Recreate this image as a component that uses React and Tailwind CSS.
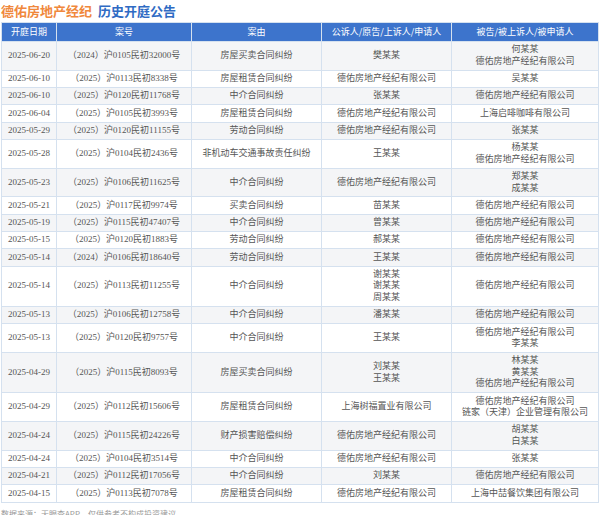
const rows = [
  ["2025-06-20","（2024）沪0105民初32000号","房屋买卖合同纠纷",["樊某某"],["何某某","德佑房地产经纪有限公司"]],
  ["2025-06-10","（2025）沪0113民初8338号","房屋租赁合同纠纷",["德佑房地产经纪有限公司"],["吴某某"]],
  ["2025-06-10","（2025）沪0120民初11768号","中介合同纠纷",["张某某"],["德佑房地产经纪有限公司"]],
  ["2025-06-04","（2025）沪0105民初3993号","房屋租赁合同纠纷",["德佑房地产经纪有限公司"],["上海启啡咖啡有限公司"]],
  ["2025-05-29","（2025）沪0120民初11155号","劳动合同纠纷",["德佑房地产经纪有限公司"],["张某某"]],
  ["2025-05-28","（2025）沪0104民初2436号","非机动车交通事故责任纠纷",["王某某"],["杨某某","德佑房地产经纪有限公司"]],
  ["2025-05-23","（2025）沪0106民初11625号","中介合同纠纷",["德佑房地产经纪有限公司"],["郑某某","成某某"]],
  ["2025-05-21","（2025）沪0117民初9974号","买卖合同纠纷",["苗某某"],["德佑房地产经纪有限公司"]],
  ["2025-05-19","（2025）沪0115民初47407号","中介合同纠纷",["曾某某"],["德佑房地产经纪有限公司"]],
  ["2025-05-15","（2025）沪0120民初1883号","劳动合同纠纷",["郝某某"],["德佑房地产经纪有限公司"]],
  ["2025-05-14","（2024）沪0106民初18640号","劳动合同纠纷",["王某某"],["德佑房地产经纪有限公司"]],
  ["2025-05-14","（2025）沪0113民初11255号","中介合同纠纷",["谢某某","谢某某","周某某"],["德佑房地产经纪有限公司"]],
  ["2025-05-13","（2025）沪0106民初12758号","中介合同纠纷",["潘某某"],["德佑房地产经纪有限公司"]],
  ["2025-05-13","（2025）沪0120民初9757号","中介合同纠纷",["王某某"],["德佑房地产经纪有限公司","李某某"]],
  ["2025-04-29","（2025）沪0115民初8093号","房屋买卖合同纠纷",["刘某某","王某某"],["林某某","黄某某","德佑房地产经纪有限公司"]],
  ["2025-04-29","（2025）沪0112民初15606号","房屋租赁合同纠纷",["上海树福置业有限公司"],["德佑房地产经纪有限公司","链家（天津）企业管理有限公司"]],
  ["2025-04-24","（2025）沪0115民初24226号","财产损害赔偿纠纷",["德佑房地产经纪有限公司"],["胡某某","白某某"]],
  ["2025-04-24","（2025）沪0104民初3514号","中介合同纠纷",["德佑房地产经纪有限公司"],["张某某"]],
  ["2025-04-21","（2025）沪0112民初17056号","中介合同纠纷",["刘某某"],["德佑房地产经纪有限公司"]],
  ["2025-04-15","（2025）沪0113民初7078号","房屋租赁合同纠纷",["德佑房地产经纪有限公司"],["上海中喆餐饮集团有限公司"]],
];

export default function App() {
  const cell = "border border-[#d5e1ef] px-1 py-[2.4px] text-center align-middle";
  return (
    <div className="w-[600px] h-[515px] bg-white overflow-hidden text-[#555]" style={{fontFamily:'"Liberation Serif","Noto Sans CJK SC",serif'}}>
      <div className="h-[22px] flex items-center gap-[6px] pl-[1px] text-[13px] font-bold" style={{fontFamily:'"Noto Sans CJK SC",sans-serif'}}>
        <span className="text-[#f0883c]">德佑房地产经纪</span>
        <span className="text-[#2f6bc4]">历史开庭公告</span>
      </div>
      <table className="w-[598px] ml-[1px] border-collapse text-[9px] leading-[11.5px]">
        <colgroup>
          <col className="w-[55px]"/><col className="w-[135px]"/><col className="w-[130px]"/><col className="w-[130px]"/><col/>
        </colgroup>
        <thead>
          <tr className="bg-[#3d74cc] text-white h-[19px]" style={{fontFamily:'"Noto Sans CJK SC",sans-serif'}}>
            {["开庭日期","案号","案由","公诉人/原告/上诉人/申请人","被告/被上诉人/被申请人"].map(h=>(
              <th key={h} className="border border-[#d5e1ef] font-normal text-center">{h}</th>
            ))}
          </tr>
        </thead>
        <tbody>
          {rows.map((r,i)=>(
            <tr key={i} className={i%2===0?"bg-[#f4f5f7]":"bg-white"}>
              <td className={cell}>{r[0]}</td>
              <td className={cell}>{r[1]}</td>
              <td className={cell}>{r[2]}</td>
              <td className={cell}>{r[3].map((t,j)=><div key={j}>{t}</div>)}</td>
              <td className={cell}>{r[4].map((t,j)=><div key={j}>{t}</div>)}</td>
            </tr>
          ))}
        </tbody>
      </table>
      <div className="mt-[5px] pl-[1px] text-[8px] text-[#999]" style={{fontFamily:'"Noto Sans CJK SC",sans-serif'}}>数据来源：天眼查APP，仅供参考不构成投资建议</div>
    </div>
  );
}
